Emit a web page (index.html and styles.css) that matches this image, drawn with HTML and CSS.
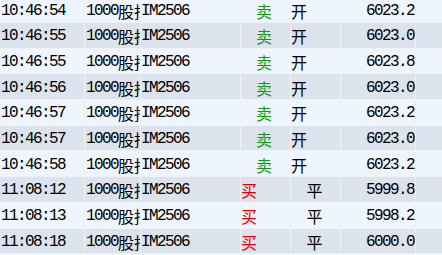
FILE: index.html
```html
<!DOCTYPE html>
<html lang="zh">
<head>
<meta charset="utf-8">
<link rel="stylesheet" href="styles.css">
</head>
<body>
<div class="list">
  <div class="row light"><div class="c time">10:46:54</div><div class="c name">1000<span class="cjk">股指</span></div><div class="c code">IM2506</div><div class="c dir sell">卖</div><div class="c oc open">开</div><div class="c price">6023.2</div><div class="c rest"></div></div>
  <div class="row grey"><div class="c time">10:46:55</div><div class="c name">1000<span class="cjk">股指</span></div><div class="c code">IM2506</div><div class="c dir sell">卖</div><div class="c oc open">开</div><div class="c price">6023.0</div><div class="c rest"></div></div>
  <div class="row light"><div class="c time">10:46:55</div><div class="c name">1000<span class="cjk">股指</span></div><div class="c code">IM2506</div><div class="c dir sell">卖</div><div class="c oc open">开</div><div class="c price">6023.8</div><div class="c rest"></div></div>
  <div class="row grey"><div class="c time">10:46:56</div><div class="c name">1000<span class="cjk">股指</span></div><div class="c code">IM2506</div><div class="c dir sell">卖</div><div class="c oc open">开</div><div class="c price">6023.0</div><div class="c rest"></div></div>
  <div class="row light"><div class="c time">10:46:57</div><div class="c name">1000<span class="cjk">股指</span></div><div class="c code">IM2506</div><div class="c dir sell">卖</div><div class="c oc open">开</div><div class="c price">6023.2</div><div class="c rest"></div></div>
  <div class="row grey"><div class="c time">10:46:57</div><div class="c name">1000<span class="cjk">股指</span></div><div class="c code">IM2506</div><div class="c dir sell">卖</div><div class="c oc open">开</div><div class="c price">6023.0</div><div class="c rest"></div></div>
  <div class="row light"><div class="c time">10:46:58</div><div class="c name">1000<span class="cjk">股指</span></div><div class="c code">IM2506</div><div class="c dir sell">卖</div><div class="c oc open">开</div><div class="c price">6023.2</div><div class="c rest"></div></div>
  <div class="row grey"><div class="c time">11:08:12</div><div class="c name">1000<span class="cjk">股指</span></div><div class="c code">IM2506</div><div class="c dir buy">买</div><div class="c oc close">平</div><div class="c price">5999.8</div><div class="c rest"></div></div>
  <div class="row light"><div class="c time">11:08:13</div><div class="c name">1000<span class="cjk">股指</span></div><div class="c code">IM2506</div><div class="c dir buy">买</div><div class="c oc close">平</div><div class="c price">5998.2</div><div class="c rest"></div></div>
  <div class="row grey"><div class="c time">11:08:18</div><div class="c name">1000<span class="cjk">股指</span></div><div class="c code">IM2506</div><div class="c dir buy">买</div><div class="c oc close">平</div><div class="c price">6000.0</div><div class="c rest"></div></div>
</div>
</body>
</html>
```
FILE: styles.css
```css
html, body {
  margin: 0;
  padding: 0;
  background: #eef5fe;
  overflow: hidden;
}
.list {
  margin-top: -2.7px;
  font-family: "Liberation Mono", monospace;
  font-size: 16px;
  letter-spacing: -1.6px;
  color: #000;
}
.row {
  display: flex;
  height: 24.7px;
  border-bottom: 1px solid #eef2f7;
}
.light { background: #eef5fe; }
.grey { background: #dce3ec; }
.c {
  flex: none;
  box-sizing: border-box;
  border-right: 1px solid #eef2f7;
  overflow: hidden;
  white-space: nowrap;
  line-height: 20px;
  display: flex;
  align-items: center;
  padding-top: 2px;
}
.cjk {
  font-family: "Noto Sans CJK SC", sans-serif;
  font-size: 16px;
  letter-spacing: 0;
  line-height: 14px;
}
.time { width: 85px; padding-left: 1px; }
.name { width: 56px; padding-left: 1px; }
.code { width: 100px; padding-left: 0; }
.dir, .oc {
  width: 50px;
  font-family: "Noto Sans CJK SC", sans-serif;
  font-size: 16px;
  letter-spacing: 0;
}
.sell { color: #109a10; justify-content: center; padding-right: 3px; }
.buy { color: #e60000; padding-left: 0; }
.open { padding-left: 0; }
.close { justify-content: center; padding-right: 2px; }
.price { width: 75px; justify-content: flex-end; padding-right: 1px; }
.rest { flex: 1; border-right: none; }
```
